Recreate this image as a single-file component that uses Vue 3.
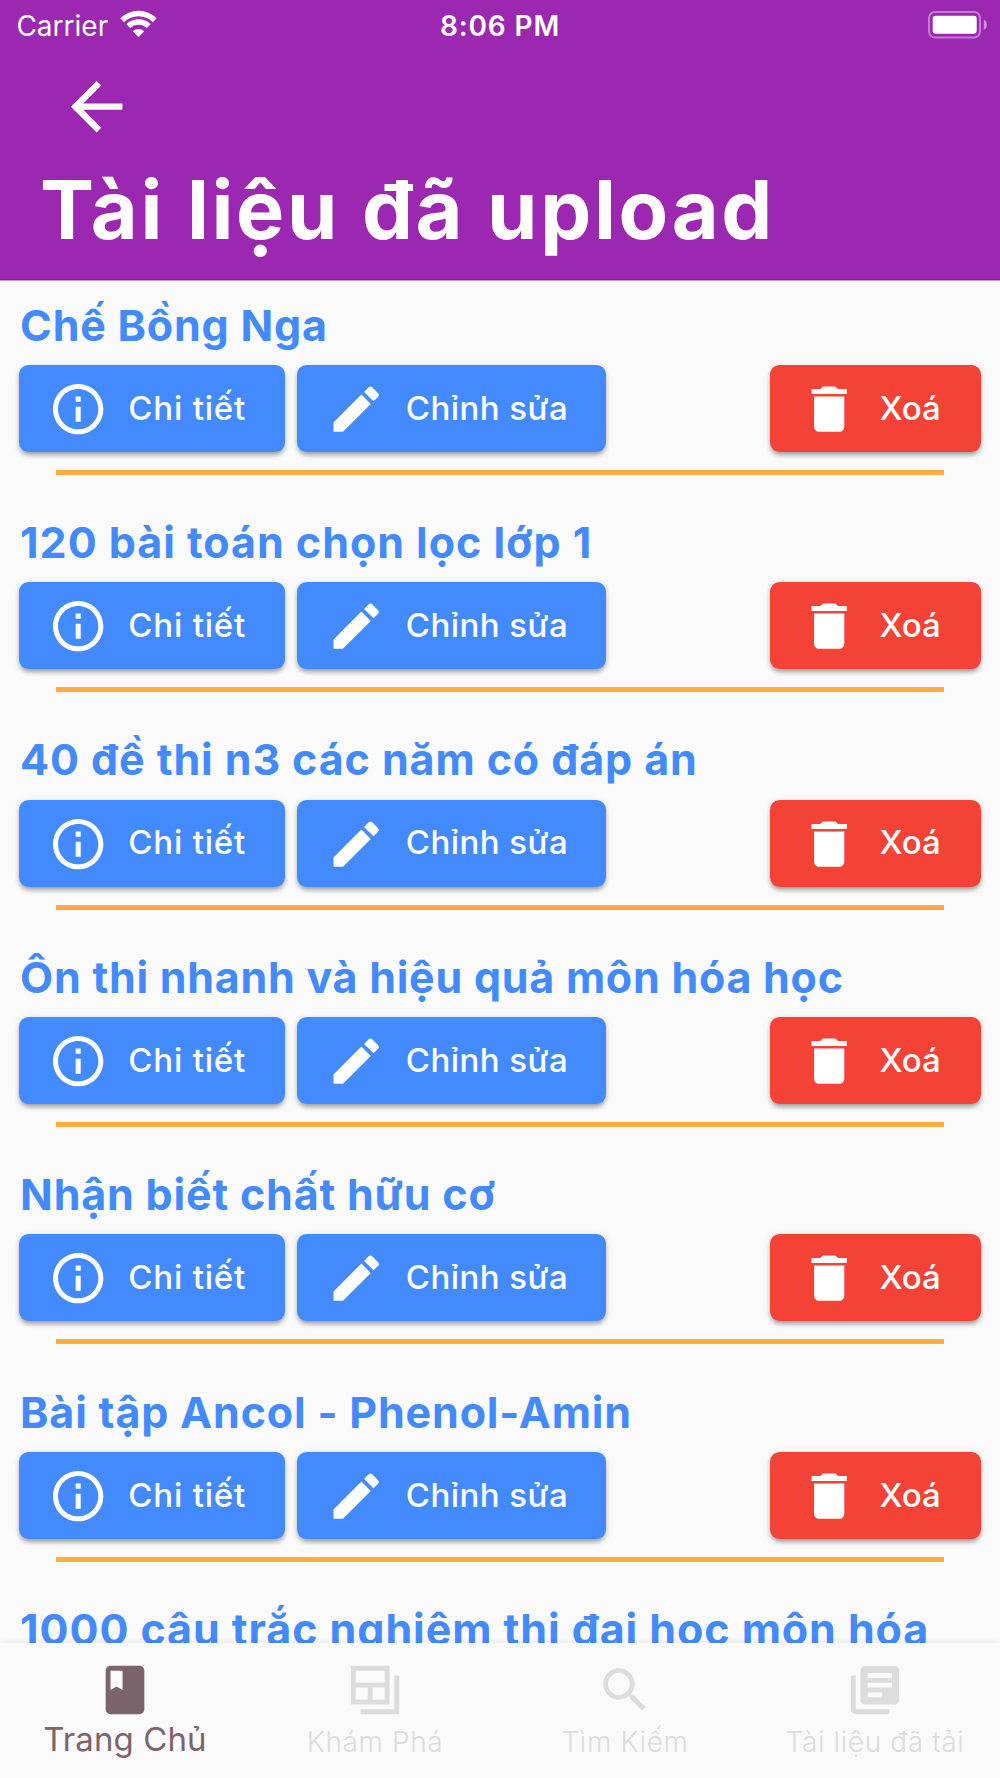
<script setup>
const documents = [
  { title: 'Chế Bồng Nga', spacing: 0.78 },
  { title: '120 bài toán chọn lọc lớp 1', spacing: 0.97 },
  { title: '40 đề thi n3 các năm có đáp án', spacing: 0.9 },
  { title: 'Ôn thi nhanh và hiệu quả môn hóa học', spacing: 0.74 },
  { title: 'Nhận biết chất hữu cơ', spacing: 0.81 },
  { title: 'Bài tập Ancol - Phenol-Amin', spacing: 0.82 },
  { title: '1000 câu trắc nghiệm thi đại học môn hóa', spacing: 0.93 },
]

const tabs = [
  {
    label: 'Trang Chủ',
    active: true,
    icon: 'M18 2H6c-1.1 0-2 .9-2 2v16c0 1.1.9 2 2 2h12c1.1 0 2-.9 2-2V4c0-1.1-.9-2-2-2zM6 4h5v8l-2.5-1.5L6 12V4z',
  },
  {
    label: 'Khám Phá',
    icon: 'M2 2h16v16H2zM4 4v5h12V4zM4 11v5h5v-5zM11 11v5h5v-5zM20 6h2v16H6v-2h14z',
  },
  {
    label: 'Tìm Kiếm',
    icon: 'M15.5 14h-.79l-.28-.27C15.41 12.59 16 11.11 16 9.5 16 5.91 13.09 3 9.5 3S3 5.91 3 9.5 5.91 16 9.5 16c1.61 0 3.09-.59 4.23-1.57l.27.28v.79l5 4.99L20.49 19l-4.99-5zm-6 0C7.01 14 5 11.99 5 9.5S7.01 5 9.5 5 14 7.01 14 9.5 11.99 14 9.5 14z',
  },
  {
    label: 'Tài liệu đã tải',
    icon: 'M4 6H2v14c0 1.1.9 2 2 2h14v-2H4V6zm16-4H8c-1.1 0-2 .9-2 2v12c0 1.1.9 2 2 2h12c1.1 0 2-.9 2-2V4c0-1.1-.9-2-2-2zm-1 9H9V9h10v2zm-4 4H9v-2h6v2zm4-8H9V5h10v2z',
  },
]
</script>

<template>
  <div class="screen">
    <header class="header">
      <div class="status">
        <div class="carrier">
          <span>Carrier</span>
          <svg class="wifi" viewBox="0 0 37 27">
            <path d="M0.3 8.3A26 26 0 0 1 36.7 8.3L32.8 12.2A20.4 20.4 0 0 0 4.2 12.2Z" />
            <path d="M6.3 14.2A17.4 17.4 0 0 1 30.7 14.2L26.8 18.1A11.8 11.8 0 0 0 10.2 18.1Z" />
            <path d="M12.8 21.2A8.6 8.6 0 0 1 24.2 21.2L18.5 27Z" />
          </svg>
        </div>
        <span class="time">8:06 PM</span>
        <div class="power">
          <svg class="battery" viewBox="0 0 60 28">
            <rect x="1" y="1" width="51" height="25.6" rx="6" fill="none" stroke="#fff" stroke-opacity=".4" stroke-width="2" />
            <rect x="4.7" y="4.8" width="44" height="18" rx="3" fill="#fff" />
            <path d="M55.8 8.6C60 10.6 60 17 55.8 19z" fill="#fff" fill-opacity=".5" />
          </svg>
        </div>
      </div>
      <svg class="back" viewBox="0 0 24 24">
        <path d="M20 11H7.83l5.59-5.59L12 4l-8 8 8 8 1.41-1.41L7.83 13H20v-2z" />
      </svg>
      <h1>Tài liệu đã upload</h1>
    </header>

    <main class="list">
      <article v-for="doc in documents" :key="doc.title" class="item">
        <h2 :style="{ letterSpacing: doc.spacing + 'px' }">{{ doc.title }}</h2>
        <div class="actions">
          <button class="btn detail">
            <svg viewBox="0 0 24 24">
              <path d="M11 7h2v2h-2zm0 4h2v6h-2zm1-9C6.48 2 2 6.48 2 12s4.48 10 10 10 10-4.48 10-10S17.52 2 12 2zm0 18c-4.41 0-8-3.59-8-8s3.59-8 8-8 8 3.59 8 8-3.59 8-8 8z" />
            </svg>
            <span>Chi tiết</span>
          </button>
          <button class="btn edit">
            <svg viewBox="0 0 24 24">
              <path d="M3 17.25V21h3.75L17.81 9.94l-3.75-3.75L3 17.25zM20.71 7.04a1 1 0 0 0 0-1.41l-2.34-2.34a1 1 0 0 0-1.41 0l-1.83 1.83 3.75 3.75 1.83-1.83z" />
            </svg>
            <span>Chỉnh sửa</span>
          </button>
          <button class="btn remove">
            <svg viewBox="0 0 24 24">
              <path d="M6 19c0 1.1.9 2 2 2h8c1.1 0 2-.9 2-2V7H6v12zM19 4h-3.5l-1-1h-5l-1 1H5v2h14V4z" />
            </svg>
            <span>Xoá</span>
          </button>
        </div>
        <hr />
      </article>
    </main>

    <nav class="tabs">
      <a v-for="tab in tabs" :key="tab.label" class="tab" :class="{ active: tab.active }">
        <svg viewBox="0 0 24 24"><path fill-rule="evenodd" :d="tab.icon" /></svg>
        <span>{{ tab.label }}</span>
      </a>
    </nav>
  </div>
</template>

<style>
body {
  margin: 0;
  background: #fafafa;
}
</style>

<style scoped>
.screen {
  display: flex;
  flex-direction: column;
  width: 1000px;
  height: 1778px;
  overflow: hidden;
  background: #fafafa;
  font-family: Inter, "Liberation Sans", sans-serif;
}

.header {
  box-sizing: border-box;
  flex: none;
  height: 281px;
  background: #9c27b0;
  border-bottom: 1px solid #c8a3d0;
  color: #fff;
  box-shadow: inset 0 -1px #8a1c9e;
}

.status {
  display: grid;
  grid-template-columns: 1fr auto 1fr;
  align-items: center;
  height: 50px;
  padding: 0 12px;
  font-size: 28px;
}

.carrier {
  display: flex;
  align-items: center;
  gap: 11.6px;
  padding-left: 4.4px;
}

.carrier span,
.time {
  padding-top: 1px;
}

.wifi {
  width: 37px;
  height: 27px;
  margin-bottom: 3px;
  fill: #fff;
}

.time {
  font-weight: 600;
  letter-spacing: 0.85px;
}

.power {
  display: flex;
  justify-content: flex-end;
}

.battery {
  width: 60px;
  height: 28px;
  margin-bottom: 1px;
}

.back {
  display: block;
  width: 77.3px;
  height: 77.3px;
  margin: 17.9px 0 0 58.2px;
  fill: #fff;
}

h1 {
  margin: 16px 0 0 40px;
  font-size: 81px;
  font-weight: 700;
  letter-spacing: 2.65px;
  line-height: 98px;
  white-space: nowrap;
}

.list {
  flex: 1;
  min-height: 0;
  overflow: hidden;
}

.item {
  box-sizing: border-box;
  height: 217.39px;
  padding: 14.7px 19.3px 0;
}

h2 {
  margin: 0 0 11.3px 0.8px;
  color: #448aff;
  font-size: 43px;
  font-weight: 700;
  line-height: 58px;
  white-space: nowrap;
}

.actions {
  display: flex;
  gap: 12px;
}

.btn {
  display: flex;
  align-items: center;
  box-sizing: border-box;
  height: 87px;
  padding: 0 0 0 29px;
  border: 0;
  border-radius: 9.7px;
  background: #448aff;
  box-shadow: 0 5px 5px -3px rgba(0, 0, 0, 0.2), 0 3px 5px rgba(0, 0, 0, 0.2), 0 1px 8px rgba(0, 0, 0, 0.08);
  color: #fff;
  font: 500 33px/40px Inter, "Liberation Sans", sans-serif;
  white-space: nowrap;
}

.btn svg {
  flex: none;
  width: 60.4px;
  height: 60.4px;
  margin: 1px 19.6px 0 0;
  fill: currentColor;
}

.btn span {
  padding-bottom: 1.6px;
}

.detail {
  width: 265.5px;
  letter-spacing: 0.8px;
}

.edit {
  width: 309px;
  letter-spacing: 0.45px;
}

.remove {
  width: 210.5px;
  margin-left: auto;
  background: #f44336;
}

.remove svg {
  margin-right: 20px;
}

hr {
  height: 5px;
  margin: 18px 36.3px 0;
  border: 0;
  background: #ffab40;
}

.tabs {
  display: flex;
  flex: none;
  height: 135.3px;
  background: #fafafa;
  box-shadow: 0 -1px 6px rgba(0, 0, 0, 0.08);
}

.tab {
  display: flex;
  flex: 1;
  flex-direction: column;
  align-items: center;
  padding-top: 18.5px;
  color: #dcdcdc;
  font-size: 28px;
  font-weight: 350;
  letter-spacing: 0.6px;
  line-height: 40px;
}

.tab svg {
  width: 58px;
  height: 58px;
  fill: currentColor;
}

.tab span {
  margin-top: 3px;
}

.tab.active {
  color: #7b646b;
  font-size: 33px;
  font-weight: 400;
  letter-spacing: 0.1px;
}

.tab.active span {
  margin-top: 0;
}
</style>
